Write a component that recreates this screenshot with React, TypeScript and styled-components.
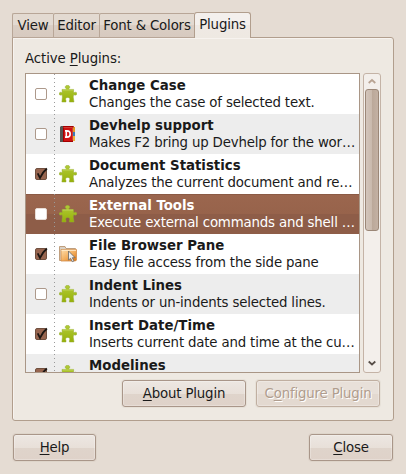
import React from "react";
import styled, { createGlobalStyle, css } from "styled-components";

const Global = createGlobalStyle`
  * { box-sizing: border-box; }
  body { margin: 0; background: #e5dcd3; }
`;

const Dialog = styled.main`
  width: 406px;
  height: 474px;
  padding: 12px 12px 0;
  overflow: hidden;
  background: #e5dcd3;
  color: #1a1a1a;
  font: 13.33px/17px "DejaVu Sans", sans-serif;
  letter-spacing: -0.17px;
  white-space: nowrap;
`;

const TabBar = styled.div`
  display: flex;
  align-items: flex-end;
  height: 26px;
`;

const Tab = styled.button<{ $width: number; $active?: boolean }>`
  width: ${(p) => p.$width}px;
  height: 25px;
  padding: 0;
  font: inherit;
  letter-spacing: -0.17px;
  color: inherit;
  border: 1px solid #b8a697;
  border-right-width: 0;
  border-radius: 2px 0 0 0;
  background: linear-gradient(#e3dad1 0 50%, #dacec4 50%, #d7cabf);
  ${(p) =>
    p.$active &&
    css`
      position: relative;
      height: 26px;
      padding-bottom: 2px;
      border: 1px solid #b19e8d;
      border-bottom: 0;
      border-radius: 3px 3px 0 0;
      background: linear-gradient(#f4f0ed 0 50%, #efe9e4 50%, #eee9e2);
    `}
`;

const Panel = styled.section`
  width: 382px;
  height: 384px;
  margin-top: -1px;
  padding: 12px 12px 0;
  border: 1px solid #b19e8d;
  border-radius: 0 3px 3px 3px;
  background: #eee9e2;
  box-shadow: inset 1px 1px #f7f3ef;
`;

const Heading = styled.div`
  height: 23px;
  letter-spacing: -0.1px;
`;

const Key = styled.span`
  text-decoration: underline;
  text-decoration-thickness: 1px;
  text-underline-offset: 2px;
  text-decoration-skip-ink: none;
`;

const ListArea = styled.div`
  display: flex;
  gap: 3px;
  height: 300px;
`;

const List = styled.div`
  width: 335px;
  border: 1px solid #a99686;
  background: #fff;
  overflow: hidden;
`;

const Row = styled.div<{ $tone: "plain" | "alt" | "selected" }>`
  display: grid;
  grid-template-columns: 29px 34px 1fr;
  height: 40px;
  background: ${(p) =>
    p.$tone === "selected"
      ? "linear-gradient(#8b5a45 0 1px, #9b664e 1px, #97634b 20px, #8e5d48 20px, #8e5d48)"
      : p.$tone === "alt"
        ? "#ededed"
        : "#fff"};
  color: ${(p) => (p.$tone === "selected" ? "#fff" : "#1a1a1a")};
`;

const CheckCell = styled.div`
  padding: 14px 0 0 9px;
  background: repeating-linear-gradient(#9a9a9a 0 1px, transparent 1px 4px) right / 1px 100% no-repeat;
`;

const Box = styled.div<{ $on: boolean; $selected: boolean }>`
  width: 12px;
  height: 12px;
  border: 1px solid ${(p) => (p.$on ? "#70503f" : p.$selected ? "#e8ddd6" : "#ad998b")};
  border-radius: 2px;
  background: ${(p) => (p.$on ? "#97654f" : "#fff")};
  svg { display: block; margin: -2px 0 0 -1px; }
`;

const IconCell = styled.div`
  padding: 11px 0 0 4px;
`;

const Words = styled.div`
  padding-top: 3px;
  line-height: 17px;
`;

const Name = styled.div`
  font-weight: bold;
  letter-spacing: 0;
`;

const Scrollbar = styled.div`
  display: flex;
  flex-direction: column;
  justify-content: space-between;
  width: 18px;
  padding: 0 1px;
  border: 1px solid #c4b3a6;
  border-radius: 3px;
  background: #f3efeb;
  svg { display: block; }
`;

const Thumb = styled.div`
  height: 142px;
  margin-bottom: auto;
  border: 1px solid #9b8777;
  border-radius: 3px;
  background: linear-gradient(90deg, #d3c5bb, #c9b9ac 50%, #bba899 50%, #c3b1a3);
`;

const Actions = styled.div<{ $bottom?: boolean }>`
  display: flex;
  justify-content: ${(p) => (p.$bottom ? "space-between" : "flex-end")};
  gap: 10px;
  margin-top: ${(p) => (p.$bottom ? 13 : 7)}px;
  padding: 0 1px;
`;

const Button = styled.button<{ $width: number }>`
  width: ${(p) => p.$width}px;
  height: 27px;
  padding: 0 0 1px;
  border: 1px solid #a99689;
  border-radius: 3px;
  font: inherit;
  letter-spacing: inherit;
  color: #1a1a1a;
  background: linear-gradient(#ede7e2, #e8e0d9 50%, #dfd4cb 50%, #dfd2c9);
  box-shadow: inset 0 0 0 1px rgba(255, 255, 255, 0.25), 0 0 0 1px rgba(120, 95, 75, 0.06);
  &:disabled {
    color: #b09d8e;
    border-color: #c0afa1;
    background: linear-gradient(#e8e0d9 50%, #e3d9d0 50%);
    text-shadow: 1px 1px #fff;
  }
`;

const Puzzle = () => (
  <svg width="18" height="18" viewBox="0 0 18 18">
    <defs>
      <linearGradient id="leaf" x2="0" y2="1">
        <stop stopColor="#b2cb38" />
        <stop offset="1" stopColor="#96b008" />
      </linearGradient>
    </defs>
    <path
      d="M3 4.4H7.2V3.6Q6 3 6.2 1.8Q6.6.3 8.5.3Q10.4.3 10.8 1.8Q11 3 9.9 3.6V4.4H14.6V7.6H15.4Q16.4 6.9 17.3 7.4Q18 8 17.8 9Q17.4 10.4 16 10.1L14.6 9.8L14.2 12L15 17H10.4V15.6Q11 14.8 10.7 13.6Q10.2 12.4 8.7 12.4Q7.2 12.4 6.7 13.6Q6.4 14.8 7 15.6V17H2.9L3.4 12L3.1 9.8L1.8 10.1Q.4 10.3.2 9Q.1 7.8.9 7.4Q1.7 7 2.3 7.6H3.2Z"
      fill="url(#leaf)"
      stroke="#94aa34"
      strokeWidth=".5"
    />
    <path d="M3.6 5H14" stroke="#c5d865" strokeWidth=".8" />
  </svg>
);

const Book = () => (
  <svg width="18" height="18" viewBox="0 0 18 18">
    <path d="M13 2h3v5h-3z" fill="#e29a24" />
    <path d="M13 7h3v4h-3z" fill="#3a7db5" />
    <path d="M13 11h3v5h-3z" fill="#edb13d" />
    <path d="M2 2L3 1H15L14 3V17H2z" fill="#a40000" />
    <path d="M1 2L2 1H4V17H1z" fill="#555753" />
    <path d="M5 3h8v13H5z" fill="#d01212" />
    <path d="M4.5 2.5h9v13" fill="none" stroke="#e0574d" strokeWidth=".7" />
    <path d="M6 5.9H8Q11.2 5.9 11.2 9T8 12.1H6M7.3 5.9v6.2" fill="none" stroke="#fff" strokeWidth="1.6" />
  </svg>
);

const Folder = () => (
  <svg width="18" height="18" viewBox="0 0 18 18">
    <defs>
      <linearGradient id="amber" x2="1" y2="1">
        <stop stopColor="#ffdfad" />
        <stop offset=".55" stopColor="#f2ac5b" />
        <stop offset="1" stopColor="#e0730a" />
      </linearGradient>
    </defs>
    <path d="M.5 15.5V1.5H6l1 2h9.5v12z" fill="#d9d0c4" stroke="#b58d64" strokeWidth=".8" />
    <path d="M2 4.5h15.5V15l-1 1H2z" fill="url(#amber)" stroke="#d08e4c" strokeWidth=".8" />
    <path d="M2.5 5.3h14.5" stroke="#ffedcf" />
    <path d="M9.5 6v9l2.1-1.7 1.7 3.4 1.7-.8-1.7-3.2h2.8z" fill="#eee" stroke="#666" strokeWidth=".8" />
  </svg>
);

const Check = () => (
  <svg width="14" height="13" viewBox="0 0 14 13">
    <path d="M2.7 6.3L5 10.8Q7.4 5.4 11.9 1.5" fill="none" stroke="#1b1512" strokeWidth="1.8" />
  </svg>
);

const Arrow = ({ down }: { down?: boolean }) => (
  <svg width="14" height="15" viewBox="0 0 14 15">
    <path
      d={down ? "M3.7 4.5l3.3 3 3.3-3" : "M3.7 9L7 6l3.3 3"}
      fill="none"
      stroke={down ? "#574e48" : "#b8a392"}
      strokeWidth="1.7"
    />
  </svg>
);

const plugins = [
  { name: "Change Case", about: "Changes the case of selected text.", on: false, Icon: Puzzle },
  { name: "Devhelp support", about: "Makes F2 bring up Devhelp for the wor…", on: false, Icon: Book },
  { name: "Document Statistics", about: "Analyzes the current document and re…", on: true, Icon: Puzzle },
  { name: "External Tools", about: "Execute external commands and shell …", on: false, Icon: Puzzle },
  { name: "File Browser Pane", about: "Easy file access from the side pane", on: true, Icon: Folder },
  { name: "Indent Lines", about: "Indents or un-indents selected lines.", on: false, Icon: Puzzle },
  { name: "Insert Date/Time", about: "Inserts current date and time at the cu…", on: true, Icon: Puzzle },
  { name: "Modelines", about: "", on: true, Icon: Puzzle },
];

const selectedIndex = 3;

export default function App() {
  return (
    <>
      <Global />
      <Dialog>
        <TabBar>
          <Tab $width={41}>View</Tab>
          <Tab $width={46}>Editor</Tab>
          <Tab $width={95}>Font &amp; Colors</Tab>
          <Tab $width={57} $active>Plugins</Tab>
        </TabBar>
        <Panel>
          <Heading>Active <Key>P</Key>lugins:</Heading>
          <ListArea>
            <List>
              {plugins.map(({ name, about, on, Icon }, i) => (
                <Row key={name} $tone={i === selectedIndex ? "selected" : i % 2 ? "alt" : "plain"}>
                  <CheckCell>
                    <Box $on={on} $selected={i === selectedIndex}>{on && <Check />}</Box>
                  </CheckCell>
                  <IconCell><Icon /></IconCell>
                  <Words>
                    <Name>{name}</Name>
                    {about && <div>{about}</div>}
                  </Words>
                </Row>
              ))}
            </List>
            <Scrollbar>
              <Arrow />
              <Thumb />
              <Arrow down />
            </Scrollbar>
          </ListArea>
          <Actions>
            <Button $width={124}><Key>A</Key>bout Plugin</Button>
            <Button $width={124} disabled>C<Key>o</Key>nfigure Plugin</Button>
          </Actions>
        </Panel>
        <Actions $bottom>
          <Button $width={83}><Key>H</Key>elp</Button>
          <Button $width={84}><Key>C</Key>lose</Button>
        </Actions>
      </Dialog>
    </>
  );
}
